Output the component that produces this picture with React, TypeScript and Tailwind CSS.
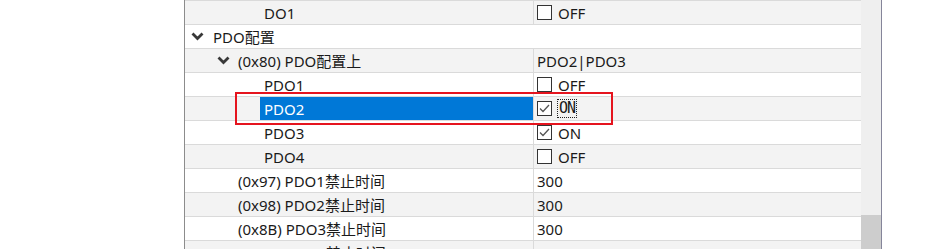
import React from 'react';

type Row = {
  label: string;
  indent: number; // x of text within the left column
  chevron?: number; // x of chevron
  value?: string;
  check?: boolean;
  full?: boolean; // category row, spans both columns
  selected?: boolean;
};

const rows: Row[] = [
  { label: 'DO1', indent: 79, check: false },
  { label: 'PDO配置', indent: 28, chevron: 6, full: true },
  { label: '(0x80) PDO配置上', indent: 53, chevron: 32, value: 'PDO2|PDO3' },
  { label: 'PDO1', indent: 79, check: false },
  { label: 'PDO2', indent: 79, check: true, selected: true },
  { label: 'PDO3', indent: 79, check: true },
  { label: 'PDO4', indent: 79, check: false },
  { label: '(0x97) PDO1禁止时间', indent: 53, value: '300' },
  { label: '(0x98) PDO2禁止时间', indent: 53, value: '300' },
  { label: '(0x8B) PDO3禁止时间', indent: 53, value: '300' },
  { label: '(0x8C) PDO4禁止时间', indent: 53, value: '300' },
];

const font = { fontFamily: '"Noto Sans", "Noto Sans CJK SC", sans-serif' };

function Chevron() {
  return (
    <svg width="13" height="9" viewBox="0 0 13 9" className="shrink-0">
      <path d="M1.5 1.5 L6.5 6.5 L11.5 1.5" fill="none" stroke="#383838" strokeWidth="2.8" />
    </svg>
  );
}

function CheckBox({ checked }: { checked: boolean }) {
  return (
    <div className="w-[15px] h-[15px] border border-[#333333] bg-white flex items-center justify-center shrink-0">
      {checked && (
        <svg width="11" height="9" viewBox="0 0 11 9">
          <path d="M1 4.5 L4 7.5 L10 1" fill="none" stroke="#555555" strokeWidth="1.3" />
        </svg>
      )}
    </div>
  );
}

function GridRow({ row, index }: { row: Row; index: number }) {
  const gray = index % 2 === 0;
  const bg = gray ? 'bg-[#f3f3f3]' : 'bg-white';
  return (
    <div className={`h-[24px] border-t border-[#dadada] flex ${bg}`}>
      {row.full ? (
        <div className="flex-1 flex items-center">
          <div className="w-[28px] flex items-center pl-[6px]">
            <Chevron />
          </div>
          <span className="text-[15px] leading-[23px] pt-[1px] text-[#1a1a1a]">{row.label}</span>
        </div>
      ) : (
        <>
          <div className="w-[348px] flex items-center">
            {row.chevron !== undefined ? (
              <div className="w-[53px] flex items-center pl-[32px]">
                <Chevron />
              </div>
            ) : row.selected ? (
              <div className="w-[75px]" />
            ) : (
              <div style={{ width: row.indent }} />
            )}
            {row.selected ? (
              <div className="flex-1 h-full bg-[#0078d7] flex items-center pl-[4px]">
                <span className="text-[15px] leading-[23px] pt-[1px] text-white">{row.label}</span>
              </div>
            ) : (
              <span className="text-[15px] leading-[23px] pt-[1px] text-[#1a1a1a] whitespace-nowrap">{row.label}</span>
            )}
          </div>
          <div className="flex-1 border-l border-[#dadada] flex items-center pl-[3px] gap-[6px]">
            {row.check !== undefined ? (
              <>
                <CheckBox checked={row.check} />
                {row.selected ? (
                  <span
                    className="text-[15px] leading-[17px] px-[1px] border border-dotted border-[#222] text-[#1a1a1a] -ml-[1px]"
                    style={{ fontFamily: '"DejaVu Sans Mono", monospace', letterSpacing: '-1px' }}
                  >
                    ON
                  </span>
                ) : (
                  <span className="text-[15px] leading-[23px] pt-[1px] text-[#1a1a1a]">{row.check ? 'ON' : 'OFF'}</span>
                )}
              </>
            ) : (
              <span className="text-[15px] leading-[23px] pt-[1px] text-[#1a1a1a]">{row.value}</span>
            )}
          </div>
        </>
      )}
    </div>
  );
}

export default function App() {
  return (
    <div className="relative w-[940px] h-[249px] overflow-hidden bg-white flex" style={font}>
      <div className="w-[184px]" />
      <div className="w-[677px] border-l border-[#8c8c8c] flex flex-col">
        <div className="h-[1px] bg-white" />
        {rows.map((row, i) => (
          <GridRow key={i} row={row} index={i} />
        ))}
      </div>
      <div className="w-[20px] bg-[#efefef] flex flex-col">
        <div className="h-[215px]" />
        <div className="flex-1 bg-[#cdcdcd]" />
      </div>
      <div className="w-[1px] bg-[#85859a]" />
      <div className="flex-1" />

      {/* annotation */}
      <div className="absolute left-[235px] top-[92px] w-[378px] h-[33px] border-2 border-[#e5141e]" />
    </div>
  );
}
